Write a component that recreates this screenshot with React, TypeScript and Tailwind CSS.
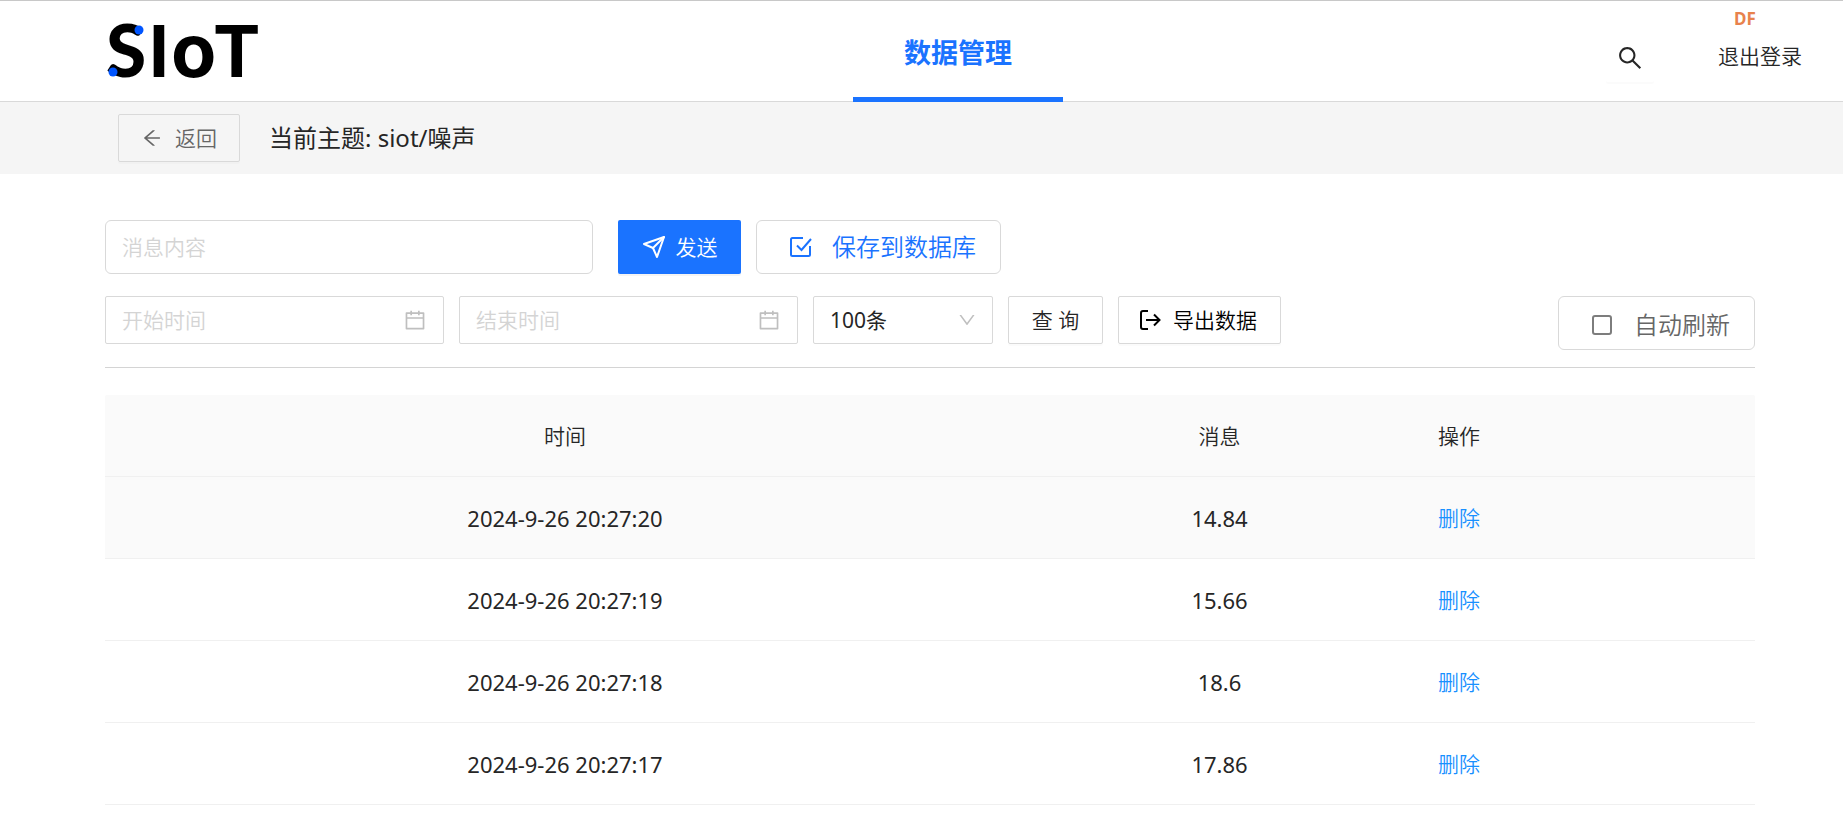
import { useState } from "react";
import { AiOutlineArrowLeft, AiOutlineCalendar, AiOutlineDown, AiOutlineSearch } from "react-icons/ai";
import { FiSend } from "react-icons/fi";

const rows = [
  { time: "2024-9-26 20:27:20", message: "14.84" },
  { time: "2024-9-26 20:27:19", message: "15.66" },
  { time: "2024-9-26 20:27:18", message: "18.6" },
  { time: "2024-9-26 20:27:17", message: "17.86" },
];

function Logo() {
  return (
    <svg width="160" height="100" viewBox="0 0 160 100" fill="#000000" role="img" aria-label="SIoT">
      <g fontFamily="Inter, sans-serif" fontWeight="700" fontSize="71">
        <text x="4" y="76" fontFamily="Lato, sans-serif" fontWeight="900" fontSize="73">S</text>
        <text x="47" y="76">I</text>
        <text x="69" y="76" fontSize="74">o</text>
        <text x="111" y="76">T</text>
      </g>
      <circle cx="37" cy="29" r="4.5" fill="#0055ff" />
      <circle cx="11" cy="71" r="4.5" fill="#0055ff" />
    </svg>
  );
}

function SaveIcon() {
  return (
    <svg width="22" height="22" viewBox="0 0 22 22" fill="none" stroke="currentColor" strokeWidth="2" aria-hidden="true">
      <path d="M13 2H2.5Q1 2 1 3.5V18.500Q1 20 2.500 20H18.500Q20 20 20 18.500V10" />
      <path d="M7 9.500L11.500 14L21 3" />
    </svg>
  );
}

function ExportIcon() {
  return (
    <svg width="22" height="22" viewBox="0 0 22 22" fill="none" stroke="currentColor" strokeWidth="2" aria-hidden="true">
      <path d="M9 2H4Q2 2 2 4V18Q2 20 4 20H9" />
      <path d="M7 11H20M15 5.500L20.500 11L15 16.500" />
    </svg>
  );
}

function DateField({ label }: { label: string }) {
  return (
    <label className="flex h-12 w-[339px] items-center rounded-xs border border-[#d9d9d9] pl-4 pr-4">
      <input
        type="text"
        aria-label={label}
        placeholder={label}
        className="min-w-0 flex-1 outline-none placeholder:text-[#d4d4d4]"
      />
      <AiOutlineCalendar size={24} className="text-[#bfbfbf]" />
    </label>
  );
}

export default function App() {
  const [content, setContent] = useState("");
  const [limit, setLimit] = useState("100");
  const [autoRefresh, setAutoRefresh] = useState(false);

  return (
    <div className="min-h-screen bg-white font-['Noto_Sans','Noto_Sans_CJK_SC',sans-serif] text-[21px] leading-8 font-[350] text-[#262626]">
      <header className="flex h-[102px] border-t border-b border-t-[#c8c8c8] border-b-[#d9d9d9] pl-[102px] pr-[29px]">
        <div className="flex flex-1 items-center">
          <Logo />
        </div>
        <nav className="-mb-px flex">
          <a
            href="#data"
            className="flex w-[210px] items-center justify-center border-b-5 border-[#1a73ff] pt-2 text-[27px] font-bold text-[#1a73ff]"
          >
            数据管理
          </a>
        </nav>
        <div className="flex flex-1 justify-end">
          <button
            type="button"
            aria-label="搜索"
            className="mr-16 mt-[33px] flex size-12 items-center justify-center rounded-xs shadow-[0_2px_0_rgba(0,0,0,0.015)]"
          >
            <AiOutlineSearch size={28} />
          </button>
          <div className="flex flex-col pr-3 pt-[6px]">
            <span className="pl-4 text-[17px] leading-6 font-bold text-[#e8824c]">DF</span>
            <a href="#logout" className="mt-[9px]">退出登录</a>
          </div>
        </div>
      </header>

      <div className="flex h-[72px] items-center gap-[29px] bg-[#f5f5f5] pl-[118px]">
        <button
          type="button"
          className="flex h-12 w-[122px] items-center justify-center gap-3 rounded-xs border border-[#d9d9d9] text-[#666666] shadow-[0_2px_0_rgba(0,0,0,0.015)]"
        >
          <AiOutlineArrowLeft size={22} />
          返回
        </button>
        <h1 className="text-2xl font-normal">当前主题: siot/噪声</h1>
      </div>

      <main className="pt-[46px] pr-[88px] pl-[105px]">
        <form className="flex items-center" onSubmit={(e) => e.preventDefault()}>
          <input
            type="text"
            aria-label="消息内容"
            placeholder="消息内容"
            value={content}
            onChange={(e) => setContent(e.target.value)}
            className="h-[54px] w-[488px] rounded-md border border-[#d9d9d9] px-4 outline-none placeholder:text-[#d4d4d4]"
          />
          <button
            type="submit"
            className="ml-[25px] flex h-[54px] w-[123px] items-center justify-center gap-[10px] rounded-xs bg-[#1a73ff] text-white shadow-[0_2px_0_rgba(0,0,0,0.045)]"
          >
            <FiSend size={24} />
            发送
          </button>
          <button
            type="button"
            className="ml-[15px] flex h-[54px] w-[245px] items-center gap-5 rounded-md border border-[#d9d9d9] pl-[33px] text-2xl text-[#1a73ff]"
          >
            <SaveIcon />
            保存到数据库
          </button>
        </form>

        <div className="mt-[22px] flex items-start gap-[15px] border-b border-[#d4d4d4] pb-[17px]">
          <DateField label="开始时间" />
          <DateField label="结束时间" />
          <div className="relative w-[180px]">
            <select
              aria-label="条数"
              value={limit}
              onChange={(e) => setLimit(e.target.value)}
              className="h-12 w-full appearance-none rounded-xs border border-[#d9d9d9] bg-white pl-4 font-normal outline-none"
            >
              <option value="100">100条</option>
              <option value="200">200条</option>
              <option value="500">500条</option>
            </select>
            <AiOutlineDown size={20} className="pointer-events-none absolute top-[14px] right-4 text-[#bfbfbf]" />
          </div>
          <button
            type="button"
            className="h-12 w-[95px] rounded-xs border border-[#d9d9d9] shadow-[0_2px_0_rgba(0,0,0,0.015)]"
          >
            查 询
          </button>
          <button
            type="button"
            className="flex h-12 w-[163px] items-center gap-3 rounded-xs border border-[#d9d9d9] pl-5 text-black shadow-[0_2px_0_rgba(0,0,0,0.015)]"
          >
            <ExportIcon />
            导出数据
          </button>
          <label className="ml-auto flex h-[54px] w-[197px] items-center gap-[22px] rounded-md border border-[#d9d9d9] pt-1 pl-[33px] text-2xl text-[#666666]">
            <input
              type="checkbox"
              checked={autoRefresh}
              onChange={(e) => setAutoRefresh(e.target.checked)}
              className="size-5 appearance-none rounded-[3px] border-2 border-[#7d7d7d] checked:bg-[#1a73ff]"
            />
            自动刷新
          </label>
        </div>

        <table className="mt-[27px] w-full table-fixed border-separate border-spacing-0 text-center">
          <colgroup>
            <col />
            <col className="w-[389px]" />
            <col className="w-[90px]" />
            <col className="w-[251px]" />
          </colgroup>
          <thead>
            <tr className="h-[82px] bg-[#fafafa] *:border-b *:border-[#f0f0f0]">
              <th className="rounded-tl-xs font-[350]">时间</th>
              <th className="font-[350]">消息</th>
              <th className="font-[350]">操作</th>
              <td className="rounded-tr-xs" />
            </tr>
          </thead>
          <tbody>
            {rows.map((row) => (
              <tr key={row.time} className="h-[82px] *:border-b *:border-[#f0f0f0] first:bg-[#fafafa]">
                <td className="text-[22px] font-normal">{row.time}</td>
                <td className="text-[22px] font-normal">{row.message}</td>
                <td>
                  <a href="#delete" className="text-[#1890ff]">删除</a>
                </td>
                <td />
              </tr>
            ))}
          </tbody>
        </table>
      </main>
    </div>
  );
}
